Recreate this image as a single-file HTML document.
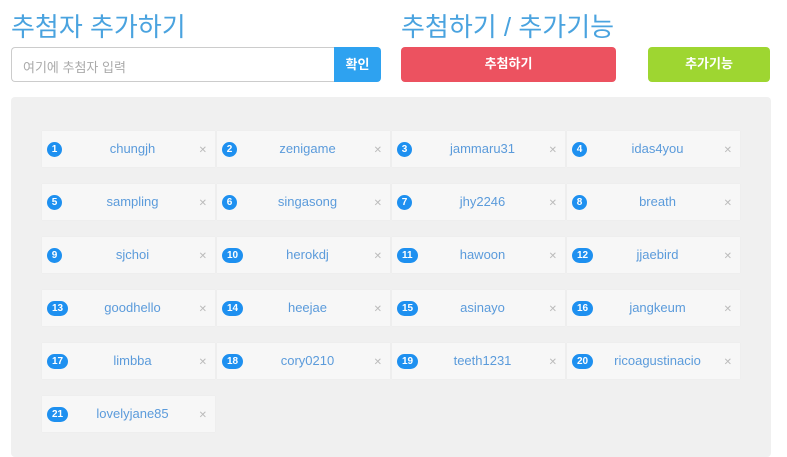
<!DOCTYPE html>
<html><head><meta charset="utf-8"><style>
*{margin:0;padding:0;box-sizing:border-box}
body{width:787px;height:450px;background:#fff;position:relative;overflow:hidden;font-family:"Liberation Sans","Noto Sans CJK KR",sans-serif}
.h{position:absolute;top:10px;font-size:26px;color:#4aa3df;font-weight:400;line-height:34px}
.inp{position:absolute;left:11px;top:47px;width:323px;height:35px;border:1px solid #ccc;border-right:none;border-radius:4px 0 0 4px;font-size:13px;color:#aaa;padding:9px 11px}
.ok{position:absolute;left:334px;top:47px;width:47px;height:35px;background:#2ea2f0;border-radius:0 4px 4px 0;color:#fff;font-size:13px;font-weight:bold;text-align:center;line-height:35px}
.btn{position:absolute;top:47px;height:35px;border-radius:4px;color:#fff;font-size:13px;font-weight:bold;text-align:center;line-height:34px}
.grid{position:absolute;left:11px;top:97px;width:760px;height:360px;background:#f0f0f0;border-radius:4px}
.c{position:absolute;width:173px;height:36px;background:#f7f7f7;box-shadow:0 0 1px #e3e3e3}
.b{position:absolute;left:5px;top:11px;height:15px;min-width:15px;padding:0 5px;border-radius:8px;background:#1e90f0;color:#fff;font-size:10px;font-weight:bold;line-height:15px;text-align:center}
.b.s{padding:0;width:15px}
.n{position:absolute;left:8px;right:0;top:0;line-height:36px;text-align:center;color:#5b9bdb;font-size:13px}
.x{position:absolute;right:8px;top:14px;color:#bbb;font-size:10px;line-height:12px}
</style></head><body>
<div class="h" style="left:11px">추첨자 추가하기</div>
<div class="h" style="left:401px">추첨하기 / 추가기능</div>
<div class="inp">여기에 추첨자 입력</div>
<div class="ok">확인</div>
<div class="btn" style="left:401px;width:215px;background:#ec5260">추첨하기</div>
<div class="btn" style="left:648px;width:122px;background:#9ed631">추가기능</div>
<div class="grid"></div>
<div class="c" style="left:42px;top:131px"><span class="n">chungjh</span><span class="b s">1</span><span class="x">✕</span></div>
<div class="c" style="left:217px;top:131px"><span class="n">zenigame</span><span class="b s">2</span><span class="x">✕</span></div>
<div class="c" style="left:392px;top:131px"><span class="n">jammaru31</span><span class="b s">3</span><span class="x">✕</span></div>
<div class="c" style="left:567px;top:131px"><span class="n">idas4you</span><span class="b s">4</span><span class="x">✕</span></div>
<div class="c" style="left:42px;top:184px"><span class="n">sampling</span><span class="b s">5</span><span class="x">✕</span></div>
<div class="c" style="left:217px;top:184px"><span class="n">singasong</span><span class="b s">6</span><span class="x">✕</span></div>
<div class="c" style="left:392px;top:184px"><span class="n">jhy2246</span><span class="b s">7</span><span class="x">✕</span></div>
<div class="c" style="left:567px;top:184px"><span class="n">breath</span><span class="b s">8</span><span class="x">✕</span></div>
<div class="c" style="left:42px;top:237px"><span class="n">sjchoi</span><span class="b s">9</span><span class="x">✕</span></div>
<div class="c" style="left:217px;top:237px"><span class="n">herokdj</span><span class="b">10</span><span class="x">✕</span></div>
<div class="c" style="left:392px;top:237px"><span class="n">hawoon</span><span class="b">11</span><span class="x">✕</span></div>
<div class="c" style="left:567px;top:237px"><span class="n">jjaebird</span><span class="b">12</span><span class="x">✕</span></div>
<div class="c" style="left:42px;top:290px"><span class="n">goodhello</span><span class="b">13</span><span class="x">✕</span></div>
<div class="c" style="left:217px;top:290px"><span class="n">heejae</span><span class="b">14</span><span class="x">✕</span></div>
<div class="c" style="left:392px;top:290px"><span class="n">asinayo</span><span class="b">15</span><span class="x">✕</span></div>
<div class="c" style="left:567px;top:290px"><span class="n">jangkeum</span><span class="b">16</span><span class="x">✕</span></div>
<div class="c" style="left:42px;top:343px"><span class="n">limbba</span><span class="b">17</span><span class="x">✕</span></div>
<div class="c" style="left:217px;top:343px"><span class="n">cory0210</span><span class="b">18</span><span class="x">✕</span></div>
<div class="c" style="left:392px;top:343px"><span class="n">teeth1231</span><span class="b">19</span><span class="x">✕</span></div>
<div class="c" style="left:567px;top:343px"><span class="n">ricoagustinacio</span><span class="b">20</span><span class="x">✕</span></div>
<div class="c" style="left:42px;top:396px"><span class="n">lovelyjane85</span><span class="b">21</span><span class="x">✕</span></div>
</body></html>
